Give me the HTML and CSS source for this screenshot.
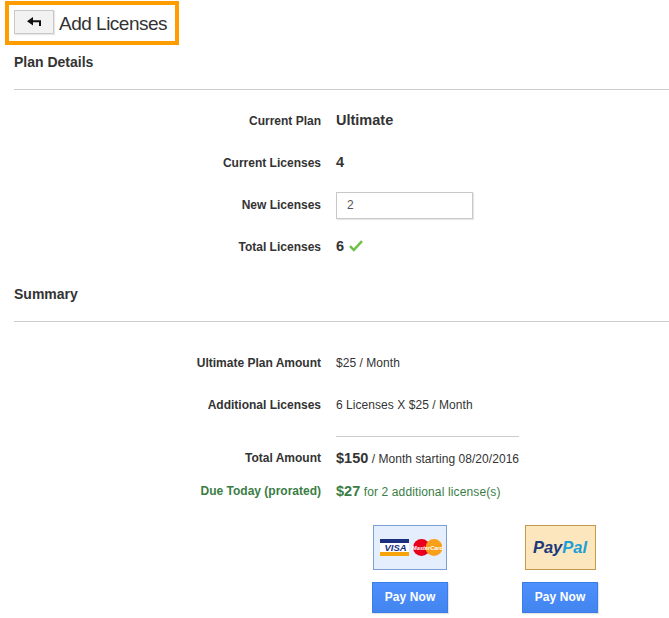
FILE: index.html
```html
<!DOCTYPE html>
<html lang="en">
<head>
<meta charset="utf-8">
<title>Add Licenses</title>
<link rel="stylesheet" href="styles.css">
</head>
<body>
<header class="title-box">
  <button class="back" type="button" aria-label="Back">
    <svg width="14" height="10" viewBox="0 0 14 10"><path d="M13 9V4.2H4" fill="none" stroke="#111" stroke-width="2"/><path d="M0 4.2L6 0V8.4Z" fill="#111"/></svg>
  </button>
  <h1>Add Licenses</h1>
</header>
<main>
  <h2 class="section first">Plan Details</h2>
  <hr class="rule">
  <div class="rows plan">
    <div class="row"><span class="label">Current Plan</span><span class="big">Ultimate</span></div>
    <div class="row"><span class="label">Current Licenses</span><span class="big">4</span></div>
    <div class="row"><span class="label">New Licenses</span><input class="field" type="text" value="2"></div>
    <div class="row"><span class="label">Total Licenses</span><span class="big">6</span>
      <svg class="check" width="14" height="12" viewBox="0 0 14 12"><path d="M1 6.2L4.8 10L13 1.2" fill="none" stroke="#6cc04a" stroke-width="2.5"/></svg>
    </div>
  </div>
  <h2 class="section">Summary</h2>
  <hr class="rule">
  <div class="rows summary">
    <div class="row"><span class="label">Ultimate Plan Amount</span><span class="val">$25 / Month</span></div>
    <div class="row"><span class="label">Additional Licenses</span><span class="val">6 Licenses X $25 / Month</span></div>
    <hr class="subrule">
    <div class="row total"><span class="label">Total Amount</span><span class="val"><b>$150</b> / Month starting 08/20/2016</span></div>
    <div class="row due"><span class="label">Due Today (prorated)</span><span class="val"><b>$27</b> for 2 additional license(s)</span></div>
  </div>
  <div class="pay">
    <div class="pay-col">
      <div class="card-logo cards">
        <svg width="64" height="17" viewBox="0 0 64 17">
          <rect x="0" y="0" width="29" height="4" fill="#1a2f7d"/>
          <rect x="0" y="4" width="29" height="9" fill="#fff"/>
          <rect x="0" y="13" width="29" height="4" fill="#f7a30b"/>
          <text x="4.5" y="11.8" class="visa">VISA</text>
          <circle cx="41.5" cy="8.5" r="8.5" fill="#e8001c"/>
          <circle cx="54" cy="8.5" r="8.5" fill="#f9a01b"/>
          <text x="47.5" y="10.5" class="mc" text-anchor="middle">MasterCard</text>
        </svg>
      </div>
      <button class="pay-btn" type="button">Pay Now</button>
    </div>
    <div class="pay-col">
      <div class="card-logo paypal"><span class="pp1">Pay</span><span class="pp2">Pal</span></div>
      <button class="pay-btn" type="button">Pay Now</button>
    </div>
  </div>
</main>
</body>
</html>
```
FILE: styles.css
```css
* { box-sizing: border-box; }
html, body { margin: 0; padding: 0; }
body {
  width: 669px;
  height: 618px;
  overflow: hidden;
  background: #fff;
  color: #333;
  font-family: "Liberation Sans", Arial, sans-serif;
  font-size: 12px;
}
.title-box {
  display: flex;
  align-items: center;
  width: 174px;
  height: 44px;
  margin: 1px 0 0 5px;
  padding: 0 0 0 5px;
  border: 4px solid #ff9c00;
}
.back {
  display: flex;
  align-items: center;
  justify-content: center;
  width: 40px;
  height: 24px;
  margin-top: -2px;
  padding: 0 0 1px;
  background: #f2f2f2;
  border: 1px solid #c8c8c8;
  box-shadow: 1px 1px 1px #e8e8e8;
}
h1 {
  margin: 1px 0 0 5px;
  font-size: 19px;
  font-weight: 400;
  letter-spacing: -0.5px;
  color: #333;
  white-space: nowrap;
}
.section {
  margin: 0 0 0 14px;
  height: 16px;
  line-height: 16px;
  font-size: 14px;
  font-weight: 700;
  color: #333;
}
.first { margin-top: 9px; }
.rule {
  height: 1px;
  margin: 19px 0 0 14px;
  border: 0;
  background: #ccc;
}
.rows { display: flex; flex-direction: column; }
.plan { padding-top: 10px; padding-bottom: 18px; }
.summary { padding-top: 20px; }
.row {
  display: flex;
  align-items: center;
  height: 42px;
}
.label {
  width: 321px;
  margin-right: 15px;
  text-align: right;
  font-weight: 700;
  color: #333;
}
.big { font-size: 14.5px; line-height: 14px; margin-bottom: 2px; font-weight: 700; }
.field {
  width: 137px;
  height: 27px;
  padding: 0 10px;
  border: 1px solid #c8c8c8;
  box-shadow: 1px 1px 1px #e8e8e8;
  outline: 0;
  font: 12px "Liberation Sans", Arial, sans-serif;
  color: #555;
}
.check { margin: -3px 0 0 5px; }
.val { white-space: nowrap; line-height: 14px; letter-spacing: 0.05px; }
.val b { font-size: 14.5px; letter-spacing: 0; }
.subrule {
  width: 183px;
  height: 1px;
  margin: 10px 0 0 336px;
  border: 0;
  background: #ccc;
}
.total { height: 32px; margin-top: 5px; }
.due { height: 34px; color: #3a7d44; }
.due .val { letter-spacing: 0.13px; }
.due .val b { letter-spacing: 0; }
.due .label { color: #3a7d44; }
.pay {
  display: flex;
  padding: 17px 0 0 372px;
  gap: 74px;
}
.pay-col {
  display: flex;
  flex-direction: column;
  align-items: center;
  width: 76px;
  gap: 12px;
}
.card-logo {
  display: flex;
  align-items: center;
  height: 45px;
}
.cards {
  justify-content: flex-start;
  width: 74px;
  padding-left: 6px;
  background: #e4eefc;
  border: 1px solid #7d9fd4;
}
.paypal {
  justify-content: center;
  width: 71px;
  background: #fbe6bd;
  border: 1px solid #c49a4c;
  font-size: 16.5px;
  font-weight: 700;
  font-style: italic;
}
.pp1 { color: #1b3a7a; }
.pp2 { color: #1b9fd8; }
.visa { font-size: 9.5px; font-weight: 700; font-style: italic; fill: #1a2f7d; }
.mc { font-size: 5.6px; font-style: italic; font-weight: 700; fill: #fff; }
.pay-btn {
  width: 76px;
  height: 31px;
  padding: 0 0 2px;
  border: 1px solid #3b7de8;
  background: linear-gradient(#4d90fe, #4285ee);
  box-shadow: 1px 1px 1px #e4e4e4;
  font: 700 12px "Liberation Sans", Arial, sans-serif;
  letter-spacing: 0.1px;
  color: #fff;
}
```
